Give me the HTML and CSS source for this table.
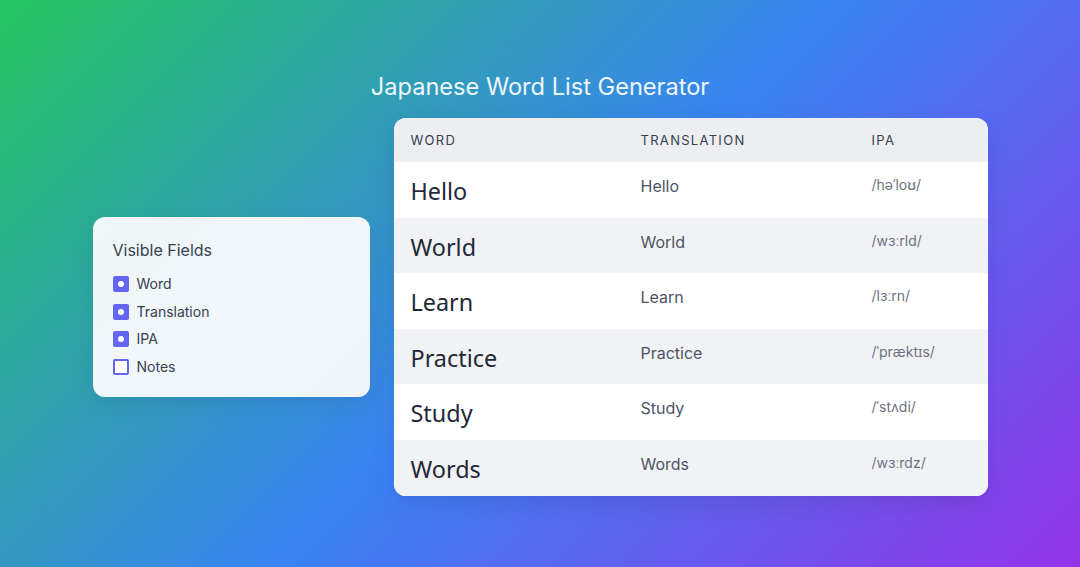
FILE: index.html
```html
<!DOCTYPE html>
<html>
<head>
<meta charset="utf-8">
<link rel="stylesheet" href="styles.css">
</head>
<body>
<div class="page">
  <h1 class="title">Japanese Word List Generator</h1>
  <div class="content">
    <div class="panel">
      <div class="panel-title">Visible Fields</div>
      <ul class="fields">
        <li class="field"><span class="box checked"></span>Word</li>
        <li class="field"><span class="box checked"></span>Translation</li>
        <li class="field"><span class="box checked"></span>IPA</li>
        <li class="field"><span class="box"></span>Notes</li>
      </ul>
    </div>
    <div class="table">
      <div class="row head">
        <div class="cell">WORD</div>
        <div class="cell">TRANSLATION</div>
        <div class="cell">IPA</div>
      </div>
      <div class="row">
        <div class="cell word">Hello</div>
        <div class="cell trans">Hello</div>
        <div class="cell ipa">/həˈloʊ/</div>
      </div>
      <div class="row alt">
        <div class="cell word">World</div>
        <div class="cell trans">World</div>
        <div class="cell ipa">/wɜːrld/</div>
      </div>
      <div class="row">
        <div class="cell word">Learn</div>
        <div class="cell trans">Learn</div>
        <div class="cell ipa">/lɜːrn/</div>
      </div>
      <div class="row alt">
        <div class="cell word">Practice</div>
        <div class="cell trans">Practice</div>
        <div class="cell ipa">/ˈpræktɪs/</div>
      </div>
      <div class="row">
        <div class="cell word">Study</div>
        <div class="cell trans">Study</div>
        <div class="cell ipa">/ˈstʌdi/</div>
      </div>
      <div class="row alt">
        <div class="cell word">Words</div>
        <div class="cell trans">Words</div>
        <div class="cell ipa">/wɜːrdz/</div>
      </div>
    </div>
  </div>
</div>
</body>
</html>
```

FILE: styles.css
```css
* { box-sizing: border-box; }
html, body { margin: 0; padding: 0; }
body {
  width: 1080px;
  height: 567px;
  overflow: hidden;
  font-family: Inter, "Noto Sans", sans-serif;
  background: linear-gradient(135deg, #22c55e 0%, #3b82f6 52%, #9333ea 100%);
}
.page {
  display: flex;
  flex-direction: column;
  align-items: center;
  padding-top: 72px;
}
.title {
  margin: 0;
  font-size: 23.6px;
  font-weight: 400;
  line-height: 30px;
  color: #eef6ff;
  letter-spacing: 0;
}
.content {
  display: flex;
  align-items: center;
  gap: 24px;
  margin-top: 16px;
  padding-left: 0;
}
.panel {
  width: 277px;
  height: 180px;
  background: rgba(247, 249, 251, 0.97);
  border-radius: 12px;
  padding: 22px 20px;
  box-shadow: 0 6px 20px rgba(0, 0, 0, 0.08);
}
.panel-title {
  font-size: 16px;
  color: #374151;
  line-height: 22px;
  margin-bottom: 13px;
}
.fields {
  list-style: none;
  margin: 0;
  padding: 0;
  display: flex;
  flex-direction: column;
  gap: 7.8px;
}
.field {
  display: flex;
  align-items: center;
  gap: 8px;
  font-size: 14px;
  color: #374151;
  line-height: 20px;
}
.box {
  width: 16px;
  height: 16px;
  border: 2px solid #6366f1;
  border-radius: 2px;
  background: #fff;
  display: flex;
  align-items: center;
  justify-content: center;
}
.box.checked {
  background: #6366f1;
}
.box.checked::after {
  content: "";
  width: 6px;
  height: 6px;
  border-radius: 50%;
  background: #fff;
}
.table {
  width: 594px;
  background: #fff;
  border-radius: 12px;
  overflow: hidden;
  box-shadow: 0 8px 24px rgba(0, 0, 0, 0.1);
}
.row {
  display: grid;
  grid-template-columns: 230px 231px 1fr;
  height: 55.6px;
  padding: 0 17px;
  align-items: start;
}
.row.alt { background: #f1f2f6; }
.row.head {
  height: 44px;
  background: #eceef2;
  align-items: center;
}
.head .cell {
  font-size: 13px;
  letter-spacing: 1.3px;
  color: #374151;
  font-weight: 400;
}
.cell.word {
  font-family: "Noto Sans", "Open Sans", sans-serif;
  font-size: 23.4px;
  line-height: 32px;
  color: #1f2937;
  padding-top: 13px;
}
.cell.trans {
  font-size: 16px;
  line-height: 24px;
  color: #4b5563;
  padding-top: 12px;
}
.cell.ipa {
  font-size: 14px;
  line-height: 22px;
  color: #6b7280;
  padding-top: 12px;
}
```
